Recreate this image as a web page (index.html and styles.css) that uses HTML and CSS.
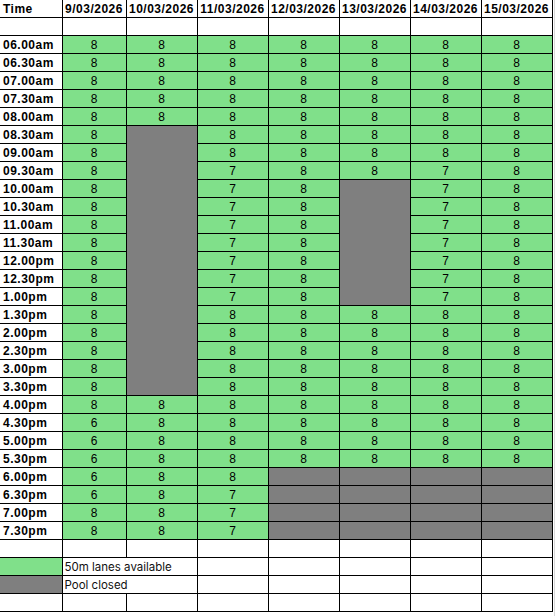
FILE: index.html
```html
<!DOCTYPE html>
<html>
<head>
<meta charset="utf-8">
<link rel="stylesheet" href="styles.css">
</head>
<body>
<div class="sheet">
<table class="sched">
<colgroup>
<col class="c-time"><col class="c-d1"><col class="c-day"><col class="c-day"><col class="c-day"><col class="c-day"><col class="c-day"><col class="c-day">
</colgroup>
<tr class="head"><td class="t">Time</td><td>9/03/2026</td><td>10/03/2026</td><td>11/03/2026</td><td>12/03/2026</td><td>13/03/2026</td><td>14/03/2026</td><td>15/03/2026</td></tr>
<tr><td></td><td></td><td></td><td></td><td></td><td></td><td></td><td></td></tr>
<tr><td class="t">06.00am</td><td class="g">8</td><td class="g">8</td><td class="g">8</td><td class="g">8</td><td class="g">8</td><td class="g">8</td><td class="g">8</td></tr>
<tr><td class="t">06.30am</td><td class="g">8</td><td class="g">8</td><td class="g">8</td><td class="g">8</td><td class="g">8</td><td class="g">8</td><td class="g">8</td></tr>
<tr><td class="t">07.00am</td><td class="g">8</td><td class="g">8</td><td class="g">8</td><td class="g">8</td><td class="g">8</td><td class="g">8</td><td class="g">8</td></tr>
<tr><td class="t">07.30am</td><td class="g">8</td><td class="g">8</td><td class="g">8</td><td class="g">8</td><td class="g">8</td><td class="g">8</td><td class="g">8</td></tr>
<tr><td class="t">08.00am</td><td class="g">8</td><td class="g">8</td><td class="g">8</td><td class="g">8</td><td class="g">8</td><td class="g">8</td><td class="g">8</td></tr>
<tr><td class="t">08.30am</td><td class="g">8</td><td class="x" rowspan="15"></td><td class="g">8</td><td class="g">8</td><td class="g">8</td><td class="g">8</td><td class="g">8</td></tr>
<tr><td class="t">09.00am</td><td class="g">8</td><td class="g">8</td><td class="g">8</td><td class="g">8</td><td class="g">8</td><td class="g">8</td></tr>
<tr><td class="t">09.30am</td><td class="g">8</td><td class="g">7</td><td class="g">8</td><td class="g">8</td><td class="g">7</td><td class="g">8</td></tr>
<tr><td class="t">10.00am</td><td class="g">8</td><td class="g">7</td><td class="g">8</td><td class="x" rowspan="7"></td><td class="g">7</td><td class="g">8</td></tr>
<tr><td class="t">10.30am</td><td class="g">8</td><td class="g">7</td><td class="g">8</td><td class="g">7</td><td class="g">8</td></tr>
<tr><td class="t">11.00am</td><td class="g">8</td><td class="g">7</td><td class="g">8</td><td class="g">7</td><td class="g">8</td></tr>
<tr><td class="t">11.30am</td><td class="g">8</td><td class="g">7</td><td class="g">8</td><td class="g">7</td><td class="g">8</td></tr>
<tr><td class="t">12.00pm</td><td class="g">8</td><td class="g">7</td><td class="g">8</td><td class="g">7</td><td class="g">8</td></tr>
<tr><td class="t">12.30pm</td><td class="g">8</td><td class="g">7</td><td class="g">8</td><td class="g">7</td><td class="g">8</td></tr>
<tr><td class="t">1.00pm</td><td class="g">8</td><td class="g">7</td><td class="g">8</td><td class="g">7</td><td class="g">8</td></tr>
<tr><td class="t">1.30pm</td><td class="g">8</td><td class="g">8</td><td class="g">8</td><td class="g">8</td><td class="g">8</td><td class="g">8</td></tr>
<tr><td class="t">2.00pm</td><td class="g">8</td><td class="g">8</td><td class="g">8</td><td class="g">8</td><td class="g">8</td><td class="g">8</td></tr>
<tr><td class="t">2.30pm</td><td class="g">8</td><td class="g">8</td><td class="g">8</td><td class="g">8</td><td class="g">8</td><td class="g">8</td></tr>
<tr><td class="t">3.00pm</td><td class="g">8</td><td class="g">8</td><td class="g">8</td><td class="g">8</td><td class="g">8</td><td class="g">8</td></tr>
<tr><td class="t">3.30pm</td><td class="g">8</td><td class="g">8</td><td class="g">8</td><td class="g">8</td><td class="g">8</td><td class="g">8</td></tr>
<tr><td class="t">4.00pm</td><td class="g">8</td><td class="g">8</td><td class="g">8</td><td class="g">8</td><td class="g">8</td><td class="g">8</td><td class="g">8</td></tr>
<tr><td class="t">4.30pm</td><td class="g">6</td><td class="g">8</td><td class="g">8</td><td class="g">8</td><td class="g">8</td><td class="g">8</td><td class="g">8</td></tr>
<tr><td class="t">5.00pm</td><td class="g">6</td><td class="g">8</td><td class="g">8</td><td class="g">8</td><td class="g">8</td><td class="g">8</td><td class="g">8</td></tr>
<tr><td class="t">5.30pm</td><td class="g">6</td><td class="g">8</td><td class="g">8</td><td class="g">8</td><td class="g">8</td><td class="g">8</td><td class="g">8</td></tr>
<tr><td class="t">6.00pm</td><td class="g">6</td><td class="g">8</td><td class="g">8</td><td class="x"></td><td class="x"></td><td class="x"></td><td class="x"></td></tr>
<tr><td class="t">6.30pm</td><td class="g">6</td><td class="g">8</td><td class="g">7</td><td class="x"></td><td class="x"></td><td class="x"></td><td class="x"></td></tr>
<tr><td class="t">7.00pm</td><td class="g">8</td><td class="g">8</td><td class="g">7</td><td class="x"></td><td class="x"></td><td class="x"></td><td class="x"></td></tr>
<tr><td class="t">7.30pm</td><td class="g">8</td><td class="g">8</td><td class="g">7</td><td class="x"></td><td class="x"></td><td class="x"></td><td class="x"></td></tr>
<tr><td></td><td></td><td></td><td></td><td></td><td></td><td></td><td></td></tr>
<tr><td class="g"></td><td class="lg" colspan="2">50m lanes available</td><td></td><td></td><td></td><td></td><td></td></tr>
<tr><td class="x"></td><td class="lg" colspan="2">Pool closed</td><td></td><td></td><td></td><td></td><td></td></tr>
<tr><td></td><td></td><td></td><td></td><td></td><td></td><td></td><td></td></tr>
</table>
</div>
</body>
</html>
```

FILE: styles.css
```css
html, body {
  margin: 0;
  padding: 0;
  background: #ffffff;
}

.sheet {
  display: inline-block;
  padding-right: 1px;
  border-right: 1px solid #d9d9d9;
  min-height: 616px;
  vertical-align: top;
}

.sched {
  border-collapse: collapse;
  table-layout: fixed;
  width: 552px;
  font-family: "Liberation Sans", Arial, sans-serif;
  font-size: 12px;
  color: #000;
}

.c-time { width: 62px; }
.c-d1 { width: 64px; }
.c-day { width: 71px; }

.sched td {
  border: 1px solid #000;
  padding: 0;
  height: 17px;
  line-height: 14px;
  text-align: center;
  vertical-align: middle;
  white-space: nowrap;
  overflow: hidden;
}

.sched tr:first-child td {
  border-top: none;
}

.sched tr td:first-child {
  border-left: none;
}

.head td {
  font-weight: bold;
  letter-spacing: 0.5px;
}

.sched td.t {
  text-align: left;
  font-weight: bold;
  letter-spacing: 0.5px;
  padding-left: 3px;
}

.g {
  background: #80e08a;
}

.x {
  background: #7f7f7f;
}

.sched td.lg {
  text-align: left;
  padding-left: 2px;
  font-family: Inter, "Liberation Sans", sans-serif;
  font-size: 11.5px;
  color: #111;
}
```
